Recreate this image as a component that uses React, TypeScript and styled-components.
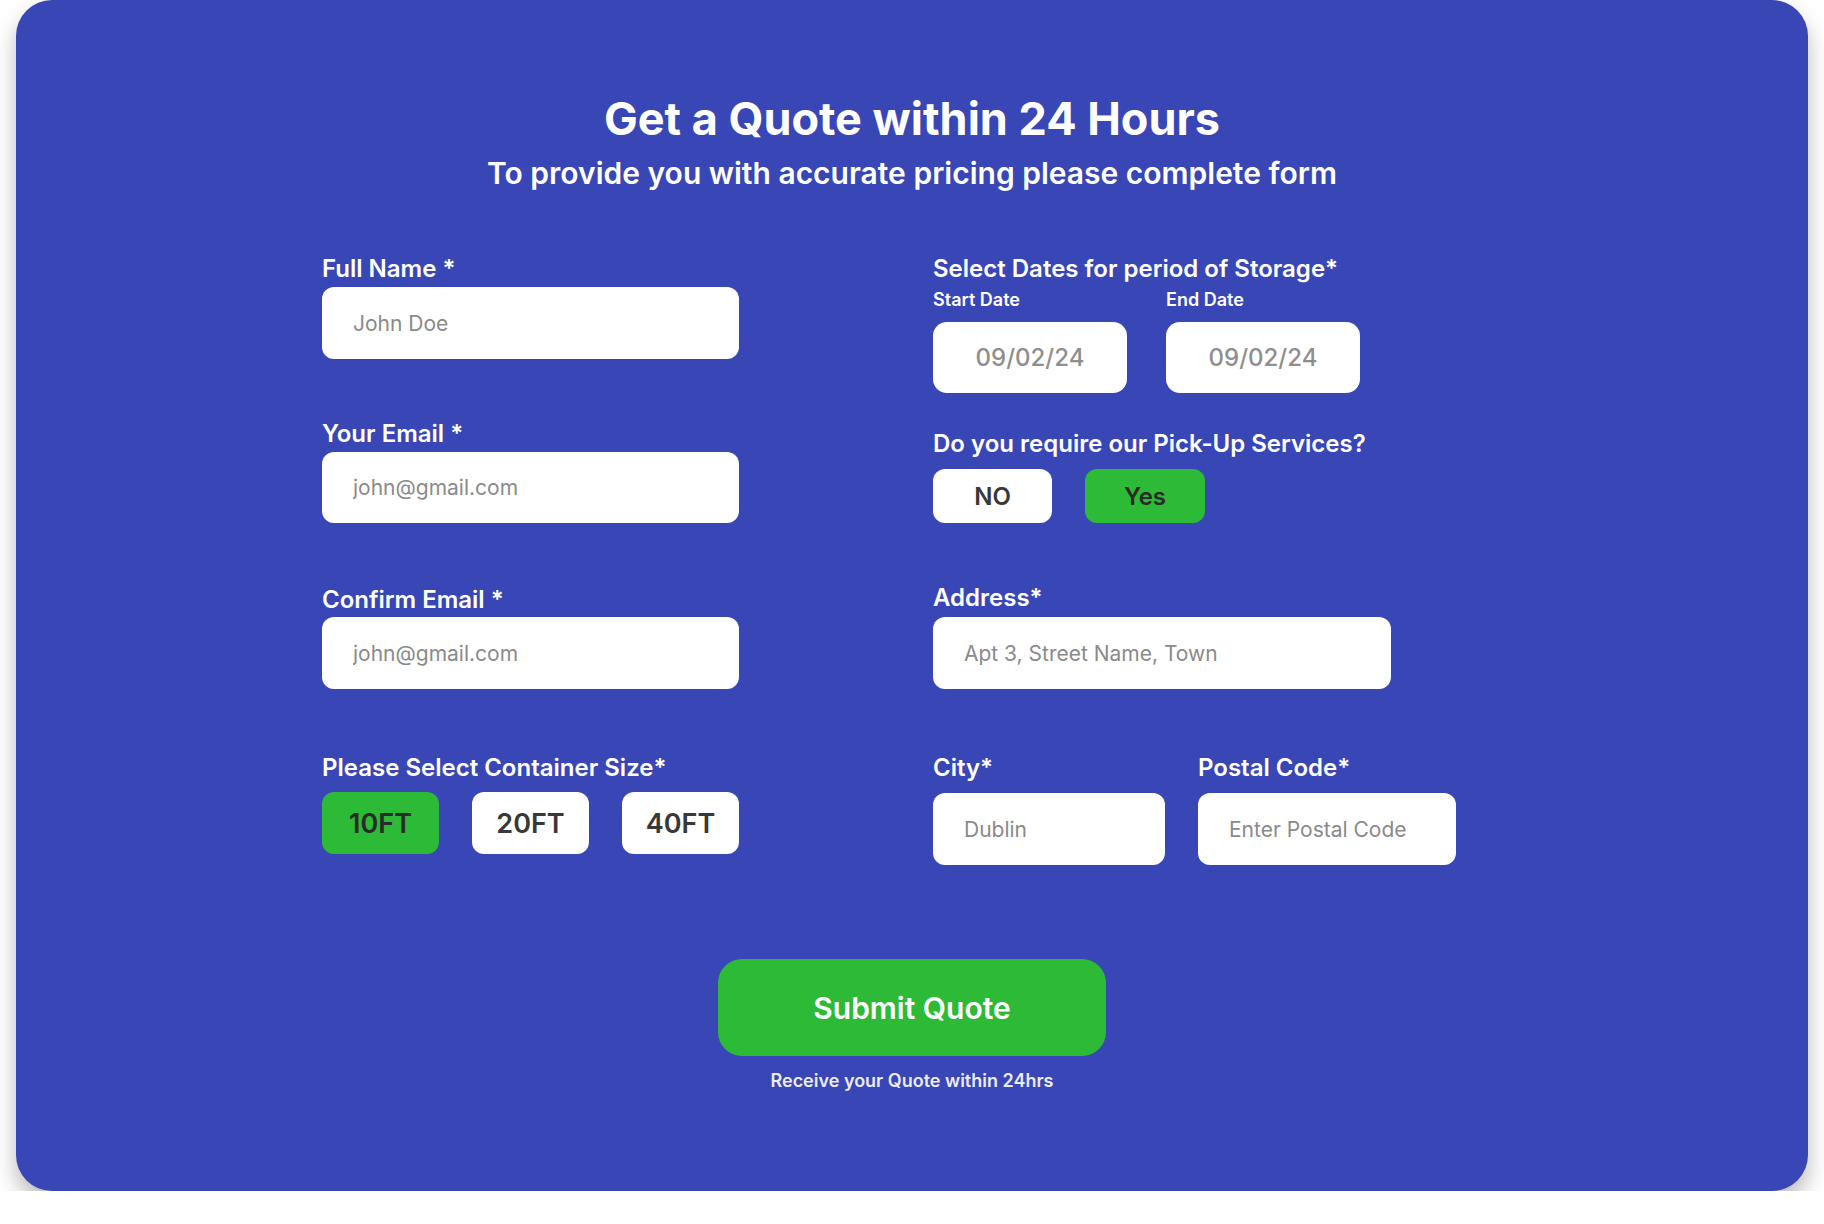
import React from 'react'
import styled, { createGlobalStyle } from 'styled-components'

const GlobalStyle = createGlobalStyle`
    * {
        box-sizing: border-box;
    }
    body {
        margin: 0;
        background: #ffffff;
        font-family: Inter, "Noto Sans", sans-serif;
    }
`

const QuoteForm: React.FC = () => {
    return (
        <>
            <GlobalStyle/>
            <Card>
                <Title>Get a Quote within 24 Hours</Title>
                <Subtitle>To provide you with accurate pricing please complete form</Subtitle>

                <FormGrid>
                    <Column>
                        <Field>
                            <Label>Full Name *</Label>
                            <TextInput placeholder="John Doe"/>
                        </Field>
                        <Field $top={60}>
                            <Label>Your Email *</Label>
                            <TextInput placeholder="john@gmail.com" $height={71}/>
                        </Field>
                        <Field $top={62} $gap={3}>
                            <Label>Confirm Email *</Label>
                            <TextInput placeholder="john@gmail.com"/>
                        </Field>
                        <Field $top={64} $gap={10}>
                            <Label>Please Select Container Size*</Label>
                            <OptionRow $spread>
                                <OptionButton $active $width={120} $height={62} $size={27}>10FT</OptionButton>
                                <OptionButton $width={120} $height={62} $size={27}>20FT</OptionButton>
                                <OptionButton $width={120} $height={62} $size={27}>40FT</OptionButton>
                            </OptionRow>
                        </Field>
                    </Column>

                    <Column>
                        <Field $gap={6}>
                            <Label>Select Dates for period of Storage*</Label>
                            <DateRow>
                                <DateField>
                                    <SubLabel>Start Date</SubLabel>
                                    <DateInput placeholder="09/02/24"/>
                                </DateField>
                                <DateField>
                                    <SubLabel>End Date</SubLabel>
                                    <DateInput placeholder="09/02/24"/>
                                </DateField>
                            </DateRow>
                        </Field>
                        <Field $top={36} $gap={11}>
                            <Label>Do you require our Pick-Up Services?</Label>
                            <OptionRow>
                                <OptionButton $width={119} $height={54} $size={24}>NO</OptionButton>
                                <OptionButton $active $width={120} $height={54} $size={24}>Yes</OptionButton>
                            </OptionRow>
                        </Field>
                        <Field $top={60} $gap={5}>
                            <Label>Address*</Label>
                            <TextInput placeholder="Apt 3, Street Name, Town" $width={458}/>
                        </Field>
                        <SplitRow>
                            <Field $gap={11}>
                                <Label>City*</Label>
                                <TextInput placeholder="Dublin" $width={232}/>
                            </Field>
                            <Field $gap={11}>
                                <Label>Postal Code*</Label>
                                <TextInput placeholder="Enter Postal Code" $width={258}/>
                            </Field>
                        </SplitRow>
                    </Column>
                </FormGrid>

                <SubmitButton type="button">Submit Quote</SubmitButton>
                <Note>Receive your Quote within 24hrs</Note>
            </Card>
        </>
    )
}

export default QuoteForm


const Card = styled.div `
    margin: 0 16px;
    height: 1191px;
    padding: 92px 0 0;
    background: #3946b6;
    border-radius: 36px;
    box-shadow: 0 12px 22px rgba(0, 0, 0, 0.28);
    display: flex;
    flex-direction: column;
    align-items: center;
    color: #ffffff;
`;

const Title = styled.h1 `
    margin: 0;
    font-size: 45px;
    font-weight: 700;
    line-height: 54px;
`;

const Subtitle = styled.p `
    margin: 9px 0 0;
    font-size: 30px;
    font-weight: 600;
    line-height: 36px;
`;

const FormGrid = styled.div `
    align-self: flex-start;
    margin: 63px 0 0 306px;
    display: grid;
    grid-template-columns: 417px 523px;
    column-gap: 194px;
`;

const Column = styled.div `
    display: flex;
    flex-direction: column;
`;

const Field = styled.div<{ $top?: number; $gap?: number }> `
    display: flex;
    flex-direction: column;
    gap: ${p => p.$gap ?? 4}px;
    margin-top: ${p => p.$top ?? 0}px;
`;

const Label = styled.label `
    font-size: 24px;
    font-weight: 600;
    line-height: 29px;
    color: #ffffff;
`;

const SubLabel = styled.span `
    font-size: 18px;
    font-weight: 600;
    line-height: 22px;
    color: #ffffff;
`;

const TextInput = styled.input<{ $width?: number; $height?: number }> `
    width: ${p => (p.$width ? `${p.$width}px` : '100%')};
    height: ${p => p.$height ?? 72}px;
    padding: 0 31px;
    border: 0;
    outline: 0;
    border-radius: 12px;
    background: #ffffff;
    font-family: Inter, "Noto Sans", sans-serif;
    font-size: 21px;
    font-weight: 400;
    color: #333333;
    &::placeholder {
        color: #8a8a8a;
    }
`;

const DateRow = styled.div `
    display: flex;
    gap: 39px;
`;

const DateField = styled.div `
    display: flex;
    flex-direction: column;
    gap: 11px;
`;

const DateInput = styled.input `
    width: 194px;
    height: 71px;
    border: 0;
    outline: 0;
    border-radius: 14px;
    background: #ffffff;
    text-align: center;
    font-family: Inter, "Noto Sans", sans-serif;
    font-size: 24px;
    font-weight: 500;
    &::placeholder {
        color: #8e8e8e;
    }
`;

const OptionRow = styled.div<{ $spread?: boolean }> `
    display: flex;
    justify-content: ${p => (p.$spread ? 'space-between' : 'flex-start')};
    gap: 33px;
`;

const OptionButton = styled.button<{ $active?: boolean; $width: number; $height: number; $size: number }> `
    width: ${p => p.$width}px;
    height: ${p => p.$height}px;
    border: 0;
    padding: 0;
    border-radius: 12px;
    background: ${p => (p.$active ? '#2dba37' : '#ffffff')};
    color: ${p => (p.$active ? '#2a2a2a' : '#383838')};
    font-family: Inter, "Noto Sans", sans-serif;
    font-size: ${p => p.$size}px;
    font-weight: 600;
    cursor: pointer;
`;

const SplitRow = styled.div `
    margin-top: 64px;
    display: flex;
    gap: 33px;
`;

const SubmitButton = styled.button `
    margin-top: 94px;
    width: 388px;
    height: 97px;
    border: 0;
    border-radius: 24px;
    background: #2dba37;
    color: #ffffff;
    font-family: Inter, "Noto Sans", sans-serif;
    font-size: 30px;
    font-weight: 600;
    cursor: pointer;
`;

const Note = styled.p `
    margin: 14px 0 0;
    font-size: 18px;
    font-weight: 600;
    line-height: 22px;
    color: #ececf7;
`;
